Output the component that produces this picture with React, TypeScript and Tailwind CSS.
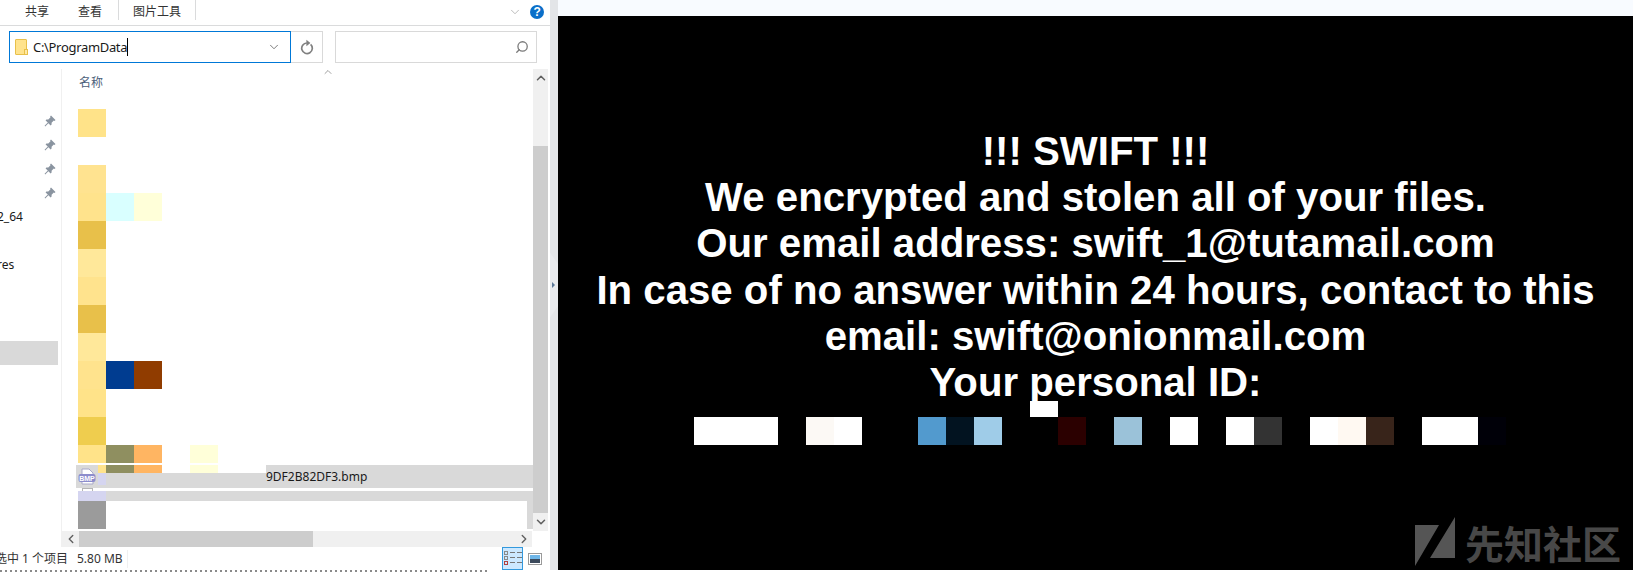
import React from "react";
import { ChevronDown, ChevronLeft, ChevronRight, ChevronUp, Search } from "lucide-react";

const uiFont = "font-['Noto_Sans','Noto_Sans_CJK_SC',sans-serif]";

// mosaic rows of the (blurred) file list, 28px cells from x=78
const mosaic: { h: string; cells: string[] }[] = [
  { h: "h-7", cells: ["bg-[#ffe389]"] },
  { h: "h-7", cells: [] },
  { h: "h-7", cells: ["bg-[#ffe390]"] },
  { h: "h-7", cells: ["bg-[#ffe38c]", "bg-[#d9ffff]", "bg-[#ffffd9]"] },
  { h: "h-7", cells: ["bg-[#e8c04a]"] },
  { h: "h-7", cells: ["bg-[#ffe89a]"] },
  { h: "h-7", cells: ["bg-[#ffe38d]"] },
  { h: "h-7", cells: ["bg-[#e8c04a]"] },
  { h: "h-7", cells: ["bg-[#ffe89a]"] },
  { h: "h-7", cells: ["bg-[#ffe38d]", "bg-[#003c90]", "bg-[#903c00]"] },
  { h: "h-7", cells: ["bg-[#ffe389]"] },
  { h: "h-7", cells: ["bg-[#efcd4e]"] },
  { h: "h-[18px]", cells: ["bg-[#ffe389]", "bg-[#8f8f60]", "bg-[#ffb562]", "bg-white", "bg-[#ffffd9]"] },
];

const idCells = [
  "bg-white", "bg-white", "bg-white", "bg-black", "bg-[#fcf9f5]", "bg-white", "bg-black", "bg-black",
  "bg-[#529ace]", "bg-[#021320]", "bg-[#9fcce8]", "bg-black", "bg-black", "bg-[#2b0000]", "bg-black",
  "bg-[#9bc2d9]", "bg-black", "bg-white", "bg-black", "bg-white", "bg-[#333333]", "bg-black",
  "bg-white", "bg-[#fff9f2]", "bg-[#38241a]", "bg-black", "bg-white", "bg-white", "bg-[#000008]",
];

function Pin() {
  return (
    <svg width="12" height="12" viewBox="0 0 12 12" className="text-[#8a94a0]">
      <path fill="currentColor" d="M7 0.5 11.5 5 10.6 5.9 9.8 5.5 7.6 7.7 7.6 9.6 6.6 10.4 4.4 8.2 1.2 11.4 0.6 10.8 3.8 7.6 1.6 5.4 2.4 4.4 4.3 4.4 6.5 2.2 6.1 1.4Z" />
    </svg>
  );
}

function NavRow({ label, pin }: { label?: string; pin?: boolean }) {
  return (
    <div className="flex h-6 items-center justify-between pr-[5px] text-[12px] text-[#1a1a1a]">
      <span className="-ml-[3px]">{label}</span>
      {pin && <Pin />}
    </div>
  );
}

function RefreshIcon() {
  return (
    <svg width="14" height="16" viewBox="0 0 14 16" className="text-[#808080]">
      <path fill="none" stroke="currentColor" strokeWidth="1.7" d="M10.6 5.4A5.3 5.3 0 1 1 6.8 4" />
      <path fill="currentColor" d="M6.4 0.8V7.2L10.4 4Z" />
    </svg>
  );
}

function BmpIcon() {
  return (
    <svg width="18" height="18" viewBox="0 0 18 18" className="shrink-0">
      <path d="M4 1h7l4 4v11H4z" fill="#fff" stroke="#a9a9c9" />
      <rect x="0.5" y="6" width="17" height="8" rx="2" fill="#8d8dcc" />
      <text x="9" y="12.6" textAnchor="middle" fontSize="7" fontWeight="700" fill="#fff" fontFamily="Liberation Sans">BMP</text>
    </svg>
  );
}

function DetailsIcon() {
  return (
    <svg width="18" height="15" viewBox="0 0 18 15">
      <g fill="none" stroke="#8a8a8a">
        <rect x="0.5" y="0.5" width="3" height="3" />
        <rect x="0.5" y="5.5" width="3" height="3" />
        <rect x="0.5" y="10.5" width="3" height="3" stroke="#b04040" />
      </g>
      <g fill="#777">
        <rect x="6" y="1" width="5" height="1" />
        <rect x="13" y="1" width="5" height="1" />
        <rect x="6" y="6" width="5" height="1" />
        <rect x="13" y="6" width="5" height="1" />
        <rect x="6" y="11" width="5" height="1" />
        <rect x="13" y="11" width="5" height="1" />
      </g>
    </svg>
  );
}

function PreviewIcon() {
  return (
    <svg width="14" height="12" viewBox="0 0 14 12">
      <rect x="0.5" y="0.5" width="13" height="11" fill="#fff" stroke="#9a9a9a" />
      <rect x="2" y="2" width="10" height="4" fill="#6fb6e8" />
      <rect x="2" y="6" width="10" height="4" fill="#3c4a5c" />
    </svg>
  );
}

function Explorer() {
  return (
    <div className={`flex h-[570px] w-[550px] shrink-0 flex-col bg-white text-[#1a1a1a] ${uiFont}`}>
      {/* ribbon */}
      <div className="flex h-[26px] shrink-0 items-start border-b border-[#dadbdc] pl-[25px] pr-[4px]">
        <span className="mt-[3px] text-[12px] leading-[18px] text-[#333]">共享</span>
        <span className="ml-[29px] mt-[3px] text-[12px] leading-[18px] text-[#333]">查看</span>
        <div className="ml-[16px] h-[20px] w-px bg-[#dadbdc]" />
        <span className="ml-[14px] mt-[3px] text-[12px] leading-[18px] text-[#333]">图片工具</span>
        <div className="ml-[14px] h-[20px] w-px bg-[#dadbdc]" />
        <ChevronDown size={14} strokeWidth={1.2} className="ml-[312px] mt-[5px] text-[#a0a0a0]" />
        <div className="ml-[8px] mt-[5px] flex h-[14px] w-[14px] items-center justify-center rounded-full bg-[#0a6fc9] font-['Liberation_Sans'] text-[12px] font-bold leading-none text-white">
          ?
        </div>
      </div>

      {/* address bar */}
      <div className="mt-[5px] flex h-[32px] shrink-0 pl-[9px]">
        <div className="flex w-[282px] items-center border border-[#0078d7] pl-[5px] pr-[9px]">
          <div className="relative h-[16px] w-[12px] rounded-[1px] border border-[#e8c04a] bg-[#ffe38d]">
            <div className="absolute -bottom-px -right-[2px] h-[6px] w-[4px] border border-[#e8c04a] bg-[#ffe9a6]" />
          </div>
          <span className="ml-[6px] text-[13px] leading-none tracking-[-0.32px]">C:\ProgramData</span>
          <div className="h-[18px] w-px bg-black" />
          <ChevronDown size={14} strokeWidth={1.3} className="ml-auto text-[#555]" />
        </div>
        <div className="flex w-[32px] items-center justify-center border border-l-0 border-[#d9d9d9] pl-[1px]">
          <RefreshIcon />
        </div>
        <div className="ml-[12px] flex w-[202px] items-center justify-end border border-[#d9d9d9] pr-[7px]">
          <Search size={14} strokeWidth={2.2} className="-scale-x-100 text-[#7a7a7a]" />
        </div>
      </div>

      {/* panes */}
      <div className="mt-[6px] flex min-h-0 flex-1">
        <div className="w-[61px] shrink-0 overflow-hidden pt-[40px]">
          <NavRow pin />
          <NavRow pin />
          <NavRow pin />
          <NavRow pin />
          <NavRow label="2_64" />
          <NavRow />
          <NavRow label="res" />
          <div className="mt-[64px] mr-[3px] h-6 bg-[#d9d9d9]" />
        </div>

        <div className="flex min-w-0 flex-1 flex-col border-l border-[#f0f0f0] pr-[2px]">
          <div className="flex min-h-0 flex-1">
            <List />
            <VerticalScroll />
          </div>
          <div className="flex h-[16px] w-[470px] shrink-0 items-center bg-[#f0f0f0] text-[#606060]">
            <div className="flex w-[17px] justify-center">
              <ChevronLeft size={14} strokeWidth={2.4} />
            </div>
            <div className="h-[16px] w-[234px] bg-[#cdcdcd]" />
            <ChevronRight size={14} strokeWidth={2.4} className="ml-auto mr-[1px]" />
          </div>
        </div>
      </div>

      {/* status bar */}
      <div className="flex h-[23px] shrink-0 items-center overflow-hidden text-[12px] leading-none text-[#333]">
        <span className="-ml-[5px] w-[82px] shrink-0 whitespace-nowrap">选中 1 个项目</span>
        <span className="w-[50px] shrink-0 whitespace-nowrap">5.80 MB</span>
        <div className="h-[18px] w-px bg-[#f0f0f0]" />
        <div className="ml-[374px] flex h-[23px] w-[21px] shrink-0 items-center justify-center border border-[#3399dd] bg-[#cce8ff]">
          <DetailsIcon />
        </div>
        <div className="ml-[5px]">
          <PreviewIcon />
        </div>
      </div>
    </div>
  );
}

function List() {
  return (
    <div className="flex min-w-0 flex-1 flex-col pt-[3px]">
      <div className="relative h-[37px] shrink-0">
        <span className="absolute left-[17px] top-[2px] text-[12px] leading-[18px] text-[#4c607a]">名称</span>
        <ChevronUp size={12} strokeWidth={1.4} className="absolute left-[260px] -top-[6px] text-[#777]" />
      </div>
      {mosaic.map((row, i) => (
        <div key={i} className={`flex pl-[16px] ${row.h}`}>
          {row.cells.map((c, j) => (
            <div key={j} className={`w-7 ${c}`} />
          ))}
        </div>
      ))}
      <div className="h-[2px] shrink-0" />
      {/* selected file row, partly masked in the picture */}
      <div className="relative ml-[14px] h-[23px] shrink-0">
        <div className="flex h-[8px] pl-[22px]">
          <div className="w-[8px] bg-[#ffe38d]" />
          <div className="w-7 bg-[#8f8f60]" />
          <div className="w-7 bg-[#ffb562]" />
          <div className="w-7" />
          <div className="w-7 bg-[#ffffd9]" />
        </div>
        <div className="absolute inset-0 flex items-end">
          <div className="flex h-full w-[22px] items-center justify-center bg-[#d9d9d9]">
            <BmpIcon />
          </div>
          <div className="h-[15px] w-[168px] bg-[#d9d9d9]">
            <div className="h-[12px] w-[8px] bg-[#d5d5f0]" />
          </div>
          <div className="flex h-full flex-1 items-center bg-[#d9d9d9] text-[12px] leading-none">9DF2B82DF3.bmp</div>
        </div>
      </div>
      <div className="ml-[20px] h-[3px] w-[11px] shrink-0 border-x border-t border-[#b5b5b5]" />
      <div className="flex h-[10px] shrink-0 pl-[16px]">
        <div className="w-7 bg-[#d5d5f0]" />
        <div className="flex-1 bg-[#d9d9d9]" />
      </div>
      <div className="flex h-[28px] shrink-0 pl-[16px]">
        <div className="w-7 bg-[#9b9b9b]" />
        <div className="ml-auto w-[6px] bg-[#d9d9d9]" />
      </div>
    </div>
  );
}

function VerticalScroll() {
  return (
    <div className="flex w-[15px] shrink-0 flex-col bg-[#f0f0f0] text-[#606060]">
      <ChevronUp size={14} strokeWidth={2.6} className="mx-auto mt-[2px] shrink-0" />
      <div className="mt-[61px] w-full flex-1 bg-[#cdcdcd]" />
      <ChevronDown size={14} strokeWidth={2.6} className="mx-auto my-[2px] shrink-0" />
    </div>
  );
}

function Splitter() {
  return (
    <div className="flex h-[570px] w-2 shrink-0 items-center bg-[#e3e5e8]">
      <div className="flex h-[65px] w-[9px] shrink-0 items-center bg-[#e9ebee] pl-[2px] [clip-path:polygon(0_0,100%_20%,100%_80%,0_100%)]">
        <div className="h-0 w-0 border-y-[3px] border-l-[3px] border-y-transparent border-l-[#5d7a9a]" />
      </div>
    </div>
  );
}

function Watermark() {
  return (
    <div className="absolute bottom-[4px] right-[12px] flex items-center gap-[10px] text-[#484848]">
      <svg width="40" height="49" viewBox="0 0 40 49">
        <path fill="#555" d="M0 8H24L0 49ZM40 0V41H15Z" />
      </svg>
      <span className="font-['Noto_Sans_CJK_SC',sans-serif] text-[39px] leading-[44px]">先知社区</span>
    </div>
  );
}

function RansomNote() {
  return (
    <div className="relative h-[554px] bg-black pt-[113px] font-['Liberation_Sans',sans-serif] font-bold text-white">
      <div className="text-center text-[40.2px] leading-[46.2px]">
        <p>!!! SWIFT !!!</p>
        <p>We encrypted and stolen all of your files.</p>
        <p>Our email address: swift_1@tutamail.com</p>
        <p>In case of no answer within 24 hours, contact to this</p>
        <p>email: swift@onionmail.com</p>
        <p>Your personal ID:</p>
      </div>
      <div className="relative ml-[136px] mt-[11px] flex">
        <div className="absolute -top-4 left-[336px] h-4 w-7 bg-white" />
        {idCells.map((c, i) => (
          <div key={i} className={`h-7 w-7 ${c}`} />
        ))}
      </div>
      <Watermark />
    </div>
  );
}

export default function App() {
  return (
    <div className="relative flex h-[572px] w-[1639px] overflow-hidden bg-white">
      <div className="w-[558px] shrink-0">
        <div className="flex">
          <Explorer />
          <Splitter />
        </div>
        <div className="h-[2px] w-[490px] bg-[repeating-linear-gradient(90deg,#8a8a8a_0_2px,#fff_2px_5px)]" />
      </div>
      <div className="w-[1075px] shrink-0">
        <div className="h-4 bg-[#f8fbff]" />
        <RansomNote />
      </div>
    </div>
  );
}
